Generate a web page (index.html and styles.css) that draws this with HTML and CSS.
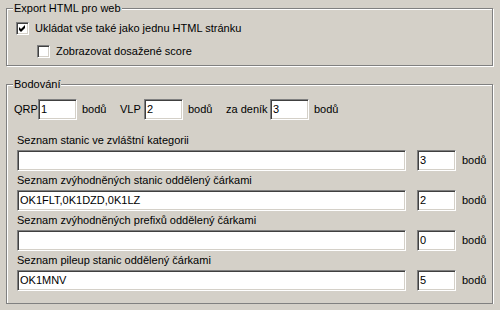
FILE: index.html
```html
<!DOCTYPE html>
<html lang="cs">
<head>
<meta charset="utf-8">
<title>Export HTML</title>
<link rel="stylesheet" href="styles.css">
</head>
<body>
<section class="group group-export">
  <div class="group-title">Export HTML pro web</div>
  <label class="check-row">
    <span class="checkbox"><svg width="7" height="7" viewBox="0 0 7 7"><path d="M0 2 L2 4 L6 0 L6 3 L2 7 L0 5 Z" fill="#000"/></svg></span>
    <span>Ukládat vše také jako jednu HTML stránku</span>
  </label>
  <label class="check-row check-sub">
    <span class="checkbox"></span>
    <span>Zobrazovat dosažené score</span>
  </label>
</section>

<section class="group group-score">
  <div class="group-title">Bodování</div>
  <div class="points-row">
    <div class="cell">
      <span class="cell-label lab-short">QRP</span>
      <span class="edit edit-small">1</span>
      <span class="unit">bodů</span>
    </div>
    <div class="cell">
      <span class="cell-label lab-short">VLP</span>
      <span class="edit edit-small">2</span>
      <span class="unit">bodů</span>
    </div>
    <div class="cell">
      <span class="cell-label lab-long">za deník</span>
      <span class="edit edit-small">3</span>
      <span class="unit">bodů</span>
    </div>
  </div>

  <div class="field field-first">
    <div class="field-label">Seznam stanic ve zvláštní kategorii</div>
    <div class="field-row">
      <span class="edit edit-wide"></span>
      <span class="edit edit-small edit-pts">3</span>
      <span class="unit unit-right">bodů</span>
    </div>
  </div>
  <div class="field">
    <div class="field-label">Seznam zvýhodněných stanic oddělený čárkami</div>
    <div class="field-row">
      <span class="edit edit-wide">OK1FLT,0K1DZD,0K1LZ</span>
      <span class="edit edit-small edit-pts">2</span>
      <span class="unit unit-right">bodů</span>
    </div>
  </div>
  <div class="field">
    <div class="field-label">Seznam zvýhodněných prefixů oddělený čárkami</div>
    <div class="field-row">
      <span class="edit edit-wide"></span>
      <span class="edit edit-small edit-pts">0</span>
      <span class="unit unit-right">bodů</span>
    </div>
  </div>
  <div class="field">
    <div class="field-label">Seznam pileup stanic oddělený čárkami</div>
    <div class="field-row">
      <span class="edit edit-wide">OK1MNV</span>
      <span class="edit edit-small edit-pts">5</span>
      <span class="unit unit-right">bodů</span>
    </div>
  </div>
</section>
</body>
</html>
```

FILE: styles.css
```css
html, body {
  margin: 0;
  background: #d4d0c8;
}
body {
  padding: 8px 7px 0 6px;
  font-family: "Liberation Sans", Arial, sans-serif;
  font-size: 11px;
  color: #000;
  width: 487px;
}

.group {
  position: relative;
  box-sizing: border-box;
  border: 1px solid #808080;
  box-shadow: inset 1px 1px 0 #fff, 1px 1px 0 #fff;
}
.group-title {
  position: absolute;
  top: -7px;
  left: 6px;
  padding: 0 1px;
  line-height: 13px;
  background: #d4d0c8;
  white-space: nowrap;
}

.group-export {
  height: 58px;
  padding: 13px 0 0 9px;
}
.check-row {
  display: flex;
  align-items: center;
  gap: 6px;
  height: 13px;
  line-height: 13px;
  white-space: nowrap;
}
.check-sub {
  margin-top: 10px;
  margin-left: 21px;
}
.checkbox {
  box-sizing: border-box;
  flex: none;
  width: 13px;
  height: 13px;
  background: #fff;
  border: 1px solid;
  border-color: #808080 #fff #fff #808080;
  box-shadow: inset 1px 1px 0 #404040, inset -1px -1px 0 #d4d0c8;
  display: flex;
  padding: 2px 0 0 2px;
}
.checkbox svg {
  display: block;
}

.group-score {
  margin-top: 18px;
  height: 220px;
  padding: 14px 0 0 7px;
}
.points-row {
  display: flex;
  height: 21px;
}
.cell {
  display: flex;
  align-items: center;
  flex: none;
  width: 106px;
}
.cell-label {
  flex: none;
  line-height: 13px;
  white-space: nowrap;
}
.lab-short {
  width: 24px;
}
.lab-long {
  width: 44px;
}
.unit {
  flex: none;
  margin-left: 5px;
  line-height: 13px;
  white-space: nowrap;
}
.unit-right {
  margin-left: 6px;
}

.edit {
  box-sizing: border-box;
  display: block;
  flex: none;
  height: 21px;
  background: #fff;
  border: 1px solid;
  border-color: #808080 #fff #fff #808080;
  box-shadow: inset 1px 1px 0 #404040, inset -1px -1px 0 #d4d0c8;
  padding: 0 0 0 2px;
  line-height: 19px;
  white-space: nowrap;
  overflow: hidden;
}
.edit-small {
  width: 39px;
}
.edit-wide {
  width: 389px;
}
.edit-pts {
  margin-left: 11px;
}

.field {
  margin: 2px 0 0 3px;
}
.field-first {
  margin-top: 13px;
}
.field-label {
  line-height: 14px;
  height: 14px;
  white-space: nowrap;
}
.field-row {
  display: flex;
  align-items: center;
  margin-top: 3px;
}
```
